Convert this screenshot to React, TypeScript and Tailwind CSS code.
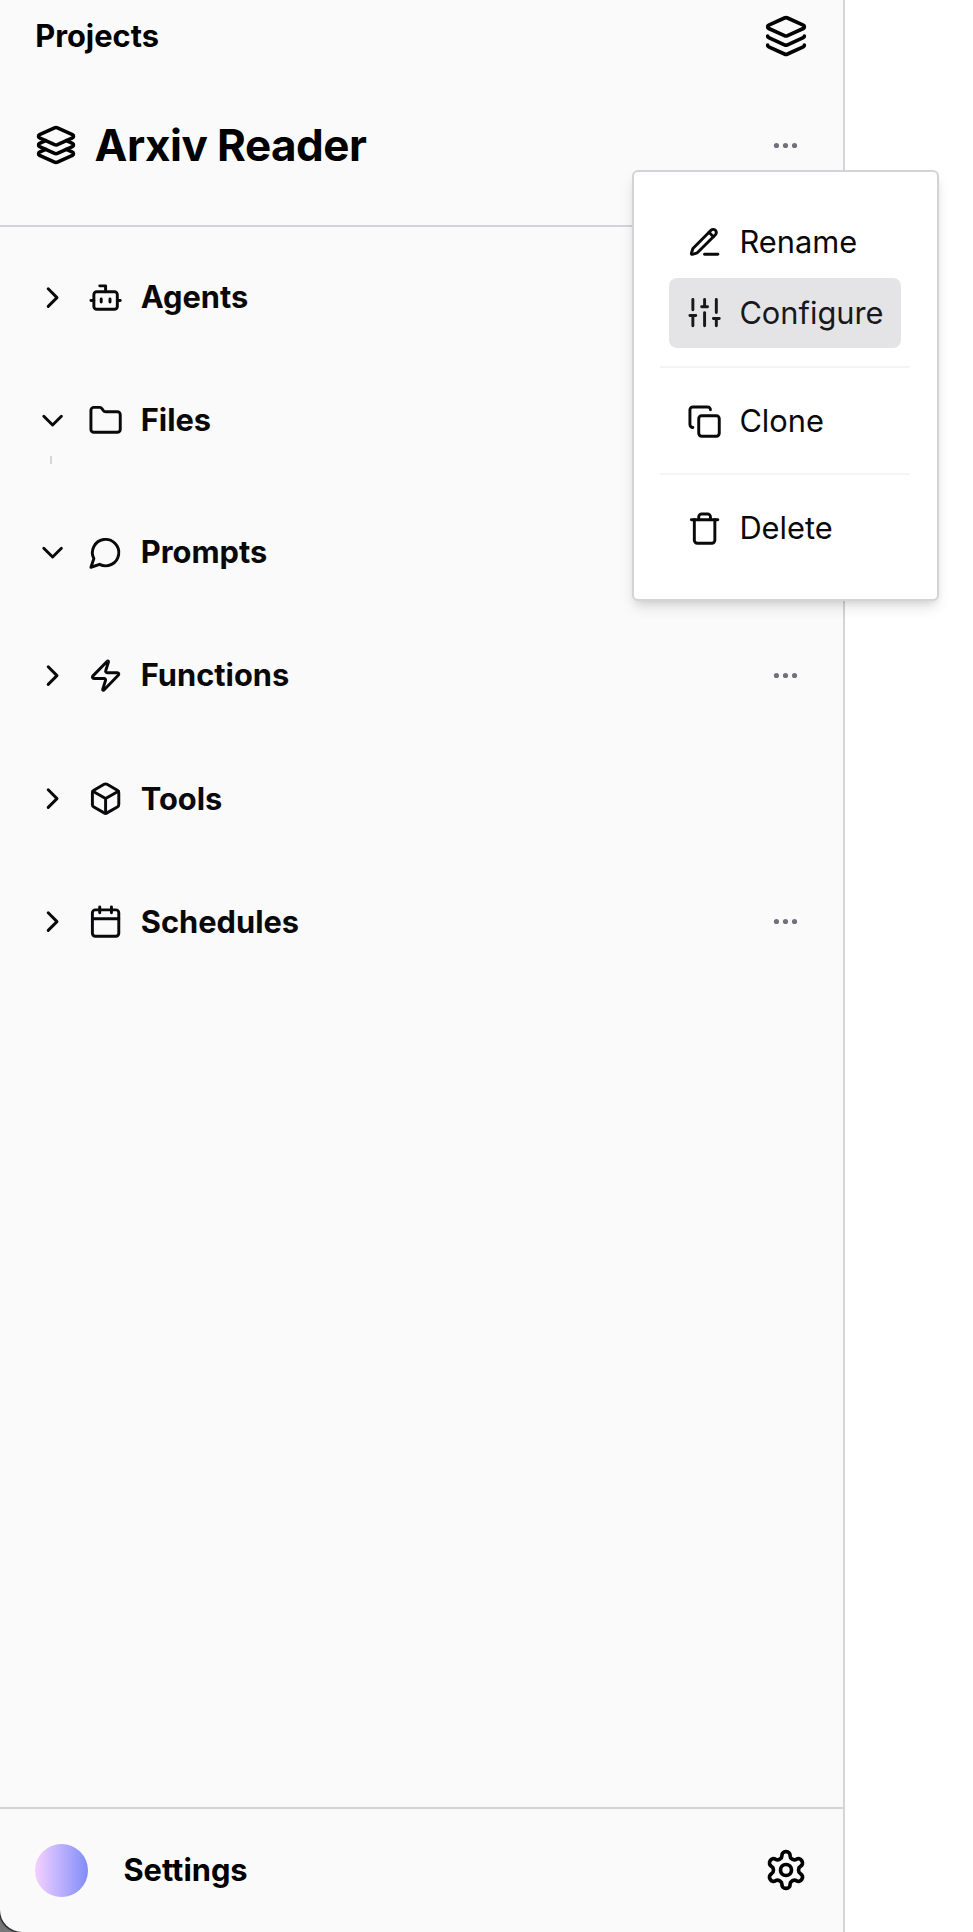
import type { ReactNode } from "react";
import { Layers } from "lucide-react";

type IconProps = { children: ReactNode; className: string };

function Icon({ children, className }: IconProps) {
  return (
    <svg
      viewBox="0 0 24 24"
      fill="none"
      stroke="currentColor"
      strokeWidth={2}
      strokeLinecap="round"
      strokeLinejoin="round"
      className={`shrink-0 ${className}`}
    >
      {children}
    </svg>
  );
}

const bot = (
  <>
    <path d="M12 8V4H8" />
    <rect width="16" height="12" x="4" y="8" rx="2" />
    <path d="M2 14h2M20 14h2M15 13v2M9 13v2" />
  </>
);
const folder = (
  <path d="M20 20a2 2 0 0 0 2-2V8a2 2 0 0 0-2-2h-7.9a2 2 0 0 1-1.69-.9L9.6 3.9A2 2 0 0 0 7.93 3H4a2 2 0 0 0-2 2v13a2 2 0 0 0 2 2Z" />
);
const message = <path d="M7.9 20A9 9 0 1 0 4 16.1L2 22Z" />;
const zap = (
  <path d="M4 14a1 1 0 0 1-.78-1.63l9.9-10.2a.5.5 0 0 1 .86.46l-1.92 6.02A1 1 0 0 0 13 10h7a1 1 0 0 1 .78 1.63l-9.9 10.2a.5.5 0 0 1-.86-.46l1.92-6.02A1 1 0 0 0 11 14z" />
);
const box = (
  <>
    <path d="M21 8a2 2 0 0 0-1-1.73l-7-4a2 2 0 0 0-2 0l-7 4A2 2 0 0 0 3 8v8a2 2 0 0 0 1 1.73l7 4a2 2 0 0 0 2 0l7-4A2 2 0 0 0 21 16Z" />
    <path d="m3.3 7 8.7 5 8.7-5M12 22V12" />
  </>
);
const calendar = (
  <>
    <path d="M8 2v4M16 2v4M3 10h18" />
    <rect width="18" height="18" x="3" y="4" rx="2" />
  </>
);
const pen = (
  <>
    <path d="M12 20h9" />
    <path d="M16.376 3.622a1 1 0 0 1 3.002 3.002L7.368 18.635a2 2 0 0 1-.855.506l-2.872.838a.5.5 0 0 1-.62-.62l.838-2.872a2 2 0 0 1 .506-.854z" />
    <path d="m15 5 3 3" />
  </>
);
const sliders = (
  <path d="M4 21v-7M4 10V3M12 21v-9M12 8V3M20 21v-5M20 12V3M2 14h4M10 8h4M18 16h4" />
);
const copy = (
  <>
    <rect width="14" height="14" x="8" y="8" rx="2" />
    <path d="M4 16c-1.1 0-2-.9-2-2V4c0-1.1.9-2 2-2h10c1.1 0 2 .9 2 2" />
  </>
);
const trash = (
  <>
    <path d="M3 6h18" />
    <path d="M19 6v14c0 1-1 2-2 2H7c-1 0-2-1-2-2V6" />
    <path d="M8 6V4c0-1 1-2 2-2h4c1 0 2 1 2 2v2" />
  </>
);
const stack = (
  <>
    <path d="m12.83 2.18a2 2 0 0 0-1.66 0L2.6 6.08a1 1 0 0 0 0 1.83l8.58 3.91a2 2 0 0 0 1.66 0l8.58-3.9a1 1 0 0 0 0-1.83Z" />
    <path d="m6.08 9.5-3.5 1.6a1 1 0 0 0 0 1.81l8.6 3.91a2 2 0 0 0 1.65 0l8.58-3.9a1 1 0 0 0 0-1.83l-3.5-1.59" />
    <path d="m6.08 14.5-3.5 1.6a1 1 0 0 0 0 1.81l8.6 3.91a2 2 0 0 0 1.65 0l8.58-3.9a1 1 0 0 0 0-1.83l-3.5-1.59" />
  </>
);
const gear = (
  <>
    <path d="M12.22 2h-.44a2 2 0 0 0-2 2v.18a2 2 0 0 1-1 1.73l-.43.25a2 2 0 0 1-2 0l-.15-.08a2 2 0 0 0-2.73.73l-.22.38a2 2 0 0 0 .73 2.73l.15.1a2 2 0 0 1 1 1.72v.51a2 2 0 0 1-1 1.74l-.15.09a2 2 0 0 0-.73 2.73l.22.38a2 2 0 0 0 2.73.73l.15-.08a2 2 0 0 1 2 0l.43.25a2 2 0 0 1 1 1.73V20a2 2 0 0 0 2 2h.44a2 2 0 0 0 2-2v-.18a2 2 0 0 1 1-1.73l.43-.25a2 2 0 0 1 2 0l.15.08a2 2 0 0 0 2.73-.73l.22-.39a2 2 0 0 0-.73-2.73l-.15-.08a2 2 0 0 1-1-1.74v-.5a2 2 0 0 1 1-1.74l.15-.09a2 2 0 0 0 .73-2.73l-.22-.38a2 2 0 0 0-2.73-.73l-.15.08a2 2 0 0 1-2 0l-.43-.25a2 2 0 0 1-1-1.73V4a2 2 0 0 0-2-2z" />
    <circle cx="12" cy="12" r="3" />
  </>
);

function More() {
  return (
    <button className="text-zinc-500">
      <Icon className="size-[31px]">
        <circle cx="12" cy="12" r="1" />
        <circle cx="19" cy="12" r="1" />
        <circle cx="5" cy="12" r="1" />
      </Icon>
    </button>
  );
}

const sections = [
  { label: "Agents", icon: bot, open: false, more: false },
  { label: "Files", icon: folder, open: true, more: false, guide: true },
  { label: "Prompts", icon: message, open: true, more: false },
  { label: "Functions", icon: zap, open: false, more: true },
  { label: "Tools", icon: box, open: false, more: false },
  { label: "Schedules", icon: calendar, open: false, more: true },
];

function MenuItem({ icon, label, active }: { icon: ReactNode; label: string; active?: boolean }) {
  return (
    <div
      className={`flex h-[70px] w-[232px] items-center gap-[17.6px] rounded-lg pl-[17.6px] text-[30.8px] ${
        active ? "mt-[0.8px] bg-[#e4e4e6] text-zinc-900" : "text-zinc-950"
      }`}
    >
      <Icon className="size-[35.2px]">{icon}</Icon>
      <span>{label}</span>
    </div>
  );
}

function Separator({ className }: { className: string }) {
  return <div className={`-mx-[9px] h-[2px] w-[250px] bg-zinc-100 ${className}`} />;
}

export default function App() {
  return (
    <div className="relative h-[1932px] w-[973px] overflow-hidden bg-white font-['Inter',sans-serif]">
      <div className="h-full w-[845px] bg-[#77777a]">
        <aside className="flex h-full flex-col rounded-bl-[22px] border-r-2 border-zinc-300 bg-[#fafafa] text-black shadow-[-1px_1px_1px_0_#222]">
          <div className="flex h-[72px] items-center justify-between pr-[35px] pl-[35.2px] text-[30.8px] font-bold">
            <span>Projects</span>
            <Layers size={44} strokeWidth={2} />
          </div>
          <div className="flex h-[155px] items-center border-b-2 border-zinc-300 pr-[42px] pb-[7px] pl-[35px]">
            <Icon className="size-[42px]">{stack}</Icon>
            <h1 className="ml-[17.6px] flex-1 text-[44px] leading-none font-bold tracking-[-0.53px]">Arxiv Reader</h1>
            <More />
          </div>
          <nav className="flex-1 pt-[8.7px] text-zinc-950">
            {sections.map((s) => (
              <section key={s.label}>
                <div className="flex h-[123.2px] items-center pr-[42px] pl-[35.2px] text-[30.8px] font-bold">
                  <Icon className="size-[35.2px]">
                    <path d={s.open ? "m6 9 6 6 6-6" : "m9 18 6-6-6-6"} />
                  </Icon>
                  <Icon className="ml-[17.6px] size-[35.2px]">{s.icon}</Icon>
                  <span className="ml-[17.6px] flex-1">{s.label}</span>
                  {s.more && <More />}
                </div>
                {s.guide && <div className="-mt-[26px] mb-[26.6px] ml-[50px] h-2 w-0.5 bg-[#d6d6d6]" />}
              </section>
            ))}
          </nav>
          <footer className="flex h-[125px] items-center border-t-2 border-zinc-300 pr-[35px] pl-[35px] text-[30.8px] font-bold">
            <div className="size-[53px] rounded-full bg-linear-to-r from-[#f5d0fe] to-[#818cf8]" />
            <span className="ml-[35.4px] flex-1">Settings</span>
            <Icon className="mb-px size-11">{gear}</Icon>
          </footer>
        </aside>
      </div>
      <div className="absolute top-[170px] left-[632px] h-[431px] w-[307px] rounded-md border-2 border-zinc-300 bg-white px-[35px] pt-[35.2px] shadow-[0_8px_14px_-2px_rgba(0,0,0,0.12),0_4px_8px_-4px_rgba(0,0,0,0.12)]">
        <MenuItem icon={pen} label="Rename" />
        <MenuItem icon={sliders} label="Configure" active />
        <Separator className="mt-[18px] mb-[18.2px]" />
        <MenuItem icon={copy} label="Clone" />
        <Separator className="mt-[17px] mb-[18.2px]" />
        <MenuItem icon={trash} label="Delete" />
      </div>
    </div>
  );
}
